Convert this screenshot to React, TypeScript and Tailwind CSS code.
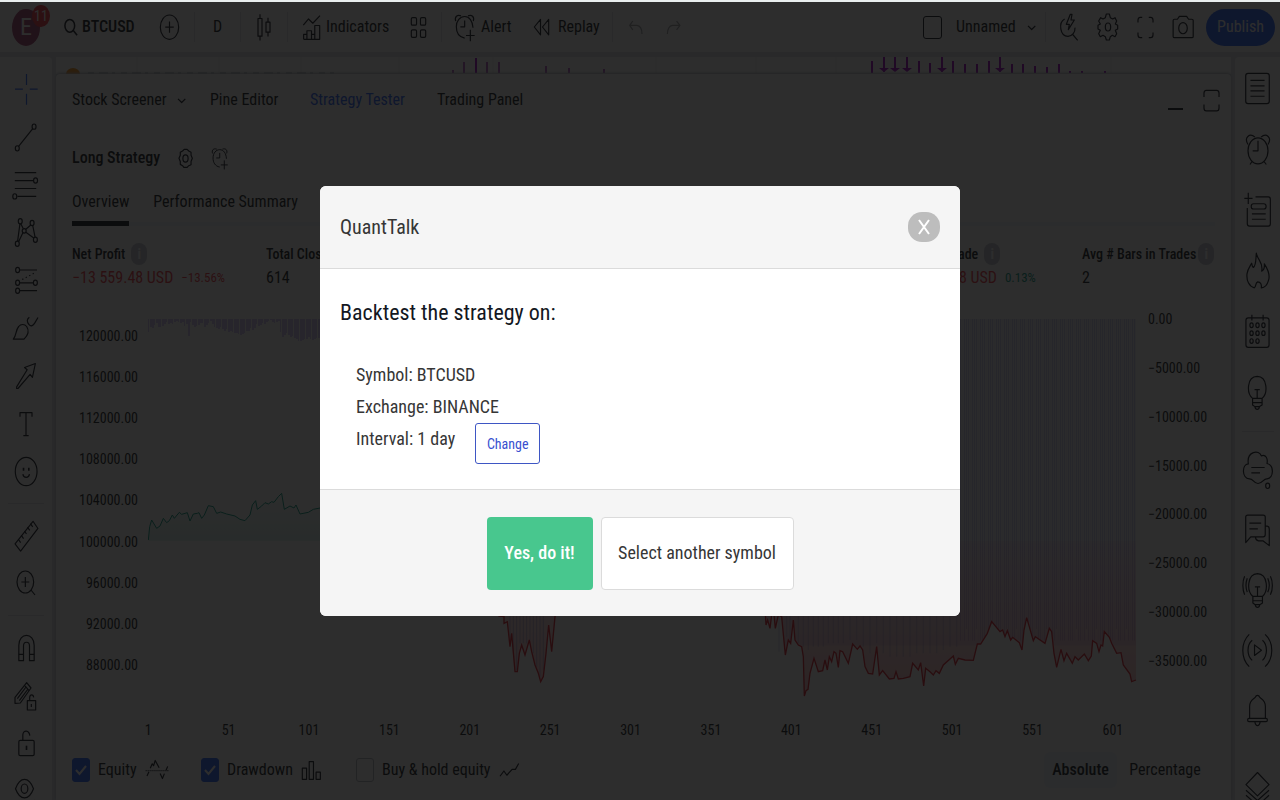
import type { ReactNode } from "react";

const ink = "#131722";

type IconProps = {
  box: string;
  className: string;
  children: ReactNode;
  color?: string;
  weight?: number;
};

/* Icons are drawn on a grid of three units to the pixel. */
function Icon({ box, className, children, color = ink, weight = 3.6 }: IconProps) {
  return (
    <svg
      viewBox={box}
      className={`shrink-0 ${className}`}
      fill="none"
      stroke={color}
      strokeWidth={weight}
      strokeLinejoin="round"
      aria-hidden="true"
    >
      {children}
    </svg>
  );
}

function AlarmPlus({ className }: { className: string }) {
  return (
    <Icon box="102 42 66 86" className={className}>
      <path d="M107 66C103 52 112 46 123 50M160 66C164 52 155 46 144 50" />
      <path d="M134 117C117 114 109 100 109 83C109 65 120 52 134 52S158 65 159 86M134 64V83H121" />
      <path d="M151 92V126M138 109H164" />
    </Icon>
  );
}

function Chevron() {
  return (
    <Icon box="530 68 30 26" className="h-[9px] w-[10px]">
      <path d="M533 76L544 87L555 76" />
    </Icon>
  );
}

function Info() {
  return (
    <span className="flex h-[22px] w-4 items-center justify-center rounded-full bg-[#c4c7d0] text-sm font-bold text-white">
      i
    </span>
  );
}

const leftTop: [string, ReactNode][] = [
  ["Cross", <Icon key="i" box="42 40 76 100" className="h-[33px] w-[25px]" color="#2962ff"><path d="M80 43V76M80 103V136M45 89H69M90 89H114" /></Icon>],
  ["Trend line", <Icon key="i" box="42 180 76 100" className="h-[33px] w-[25px]"><ellipse cx="52" cy="263" rx="6" ry="8" /><ellipse cx="103" cy="197" rx="6" ry="8" /><path d="M56 257L99 203" /></Icon>],
  ["Fib retracement", <Icon key="i" box="38 324 84 100" className="h-[33px] w-[28px]"><path d="M46 335H111M46 359H102M46 383H111M54 407H111" /><ellipse cx="109" cy="359" rx="6" ry="8" /><ellipse cx="46" cy="407" rx="6" ry="8" /></Icon>],
  ["Patterns", <Icon key="i" box="42 466 76 100" className="h-[33px] w-[25px]"><g><ellipse cx="61" cy="482" rx="6" ry="8" /><ellipse cx="97" cy="487" rx="6" ry="8" /><ellipse cx="73" cy="511" rx="6" ry="7" /><ellipse cx="52" cy="550" rx="6" ry="8" /><ellipse cx="107" cy="538" rx="6" ry="8" /></g><path d="M60 490L53 542M63 490L70 504M93 493L78 506M99 495L106 530M69 517L56 544M78 515L102 533" /></Icon>],
  ["Prediction", <Icon key="i" box="38 616 76 92" className="h-[31px] w-[25px]"><ellipse cx="49" cy="630" rx="6" ry="8" /><ellipse cx="49" cy="669" rx="6" ry="8" /><ellipse cx="103" cy="669" rx="6" ry="8" /><ellipse cx="49" cy="693" rx="6" ry="8" /><path d="M56 630H108M56 669H96M56 693H108" /><path d="M63 659L104 637" strokeDasharray="4 8" /></Icon>],
  ["Brush", <Icon key="i" box="40 46 84 80" className="h-[27px] w-[28px]"><path d="M44 118C54 106 50 92 60 80C66 72 78 72 84 80C92 92 88 106 76 118H44Z" /><path d="M92 52C84 58 84 66 91 74C97 82 104 76 108 70L118 53" /></Icon>],
  ["Arrow", <Icon key="i" box="42 180 76 90" className="h-[30px] w-[25px]"><path d="M107 187L74 199L82 206L50 258V263H54L91 220L98 229L107 187Z" /></Icon>],
  ["Text", <Icon key="i" box="56 326 48 84" className="h-[28px] w-4"><path d="M62 346V334H98V346M80 334V403M72 403H88" /></Icon>],
  ["Emoji", <Icon key="i" box="42 464 74 94" className="h-[31px] w-[25px]"><ellipse cx="78" cy="511" rx="33" ry="43" /><path d="M68 519C70 532 86 532 88 519" /><path d="M70 500V509M86 500V509" strokeWidth="5" /></Icon>],
];

const leftMid: [string, ReactNode][] = [
  ["Measure", <Icon key="i" box="38 654 80 104" className="h-[34px] w-[27px]"><path d="M98 661L113 683L60 752L43 730Z" /><path d="M53 716L60 726M62 704L69 714M72 691L78 700M81 679L88 689M90 668L97 678" /></Icon>],
  ["Zoom in", <Icon key="i" box="44 56 64 84" className="h-[28px] w-[22px]"><ellipse cx="74" cy="95" rx="25" ry="33" /><path d="M74 80V110M62 95H86M91 119L103 134" /></Icon>],
];

const leftBottom: [string, ReactNode][] = [
  ["Magnet", <Icon key="i" box="50 250 56 84" className="h-[28px] w-[19px]"><path d="M55 330V284C55 244 101 244 101 284V330H87V286C87 271 69 271 69 286V330H55Z" /><path d="M55 311H69M87 311H101" /></Icon>],
  ["Drawing mode", <Icon key="i" box="42 386 72 96" className="h-[32px] w-[24px]"><path d="M80 394L93 410L61 455L45 456V438L80 394ZM74 402L87 418M52 442L78 407M58 448L84 413" /><path d="M82 448H107V476H82ZM89 448V438C90 428 100 428 101 438" /><path d="M94 458V467" /></Icon>],
  ["Lock", <Icon key="i" box="50 540 56 84" className="h-[28px] w-[19px]"><rect x="55" y="574" width="46" height="46" rx="4" /><path d="M67 574V557C68 542 86 542 88 560" /><path d="M78 590V603" strokeWidth="5" /></Icon>],
  ["Hide", <Icon key="i" box="44 670 74 90" className="h-[30px] w-[25px]"><path d="M48 708C62 671 88 671 102 708C88 745 62 745 48 708Z" /><ellipse cx="75" cy="708" rx="10" ry="14" /><path d="M88 748C91 742 98 744 98 750M106 742L103 752" /></Icon>],
];

const rightTop: [string, ReactNode][] = [
  ["Watchlist", <Icon key="i" box="882 36 80 98" className="h-[33px] w-[27px]"><rect x="887" y="40" width="70" height="90" rx="7" /><path d="M901 61H943M901 77H943M901 92H943M901 108H943" /></Icon>],
  ["Alerts", <Icon key="i" box="884 216 78 104" className="h-[35px] w-[26px]"><ellipse cx="923" cy="272" rx="30" ry="39" /><path d="M893 253C880 232 898 217 914 231M953 253C966 232 948 217 932 231M923 242V272H907M905 304L899 313M941 304L948 313" /></Icon>],
  ["Object list", <Icon key="i" box="874 396 88 108" className="h-[36px] w-[29px]"><path d="M890 398V432M878 415H903M912 410H951Q957 410 957 418V492Q957 499 951 499H894Q887 499 887 491V444" /><rect x="899" y="431" width="45" height="16" rx="7" /><path d="M901 462H943M901 478H943" /></Icon>],
  ["Hotlists", <Icon key="i" box="884 576 78 116" className="h-[39px] w-[26px]"><path d="M918 582C922 604 940 610 934 636C941 633 943 625 942 614C955 634 960 650 954 665C951 676 943 685 933 686C934 678 932 668 922 668C914 671 918 683 912 686C896 682 888 664 890 644C892 629 900 620 904 612C905 617 905 623 909 625C918 618 916 600 918 582Z" /></Icon>],
  ["Calendar", <Icon key="i" box="882 44 80 106" className="h-[35px] w-[27px]"><rect x="887" y="56" width="70" height="89" rx="7" /><path d="M905 46V64M939 46V64" /><g><ellipse cx="904" cy="78" rx="5" ry="7" /><ellipse cx="922" cy="78" rx="5" ry="7" /><ellipse cx="940" cy="78" rx="5" ry="7" /><ellipse cx="904" cy="102" rx="5" ry="7" /><ellipse cx="922" cy="102" rx="5" ry="7" /><ellipse cx="940" cy="102" rx="5" ry="7" /><ellipse cx="904" cy="126" rx="5" ry="7" /><ellipse cx="922" cy="126" rx="5" ry="7" /></g></Icon>],
  ["My ideas", <Icon key="i" box="892 224 64 112" className="h-[37px] w-[21px]"><path d="M909 298C890 282 891 232 923 231C955 232 956 282 938 298V318L930 323C928 334 918 334 916 323L909 318ZM909 298H938M909 311H938M916 323H930M923 298V271M915 271H931" /></Icon>],
];

const rightBottom: [string, ReactNode][] = [
  ["Chat", <Icon key="i" box="874 448 96 122" className="h-[41px] w-[32px]"><path d="M893 489C887 451 926 445 932 465C946 460 952 474 949 488C971 493 970 532 949 534C938 533 936 548 922 548C908 548 908 533 896 534C873 533 873 491 893 489Z" /><path d="M902 500H942M902 516H928" /><ellipse cx="951" cy="555" rx="6" ry="8" /></Icon>],
  ["Messages", <Icon key="i" box="882 632 80 104" className="h-[35px] w-[27px]"><path d="M887 720V644Q887 638 893 638H939Q945 638 945 644V696Q945 703 939 703H902ZM945 671H951Q957 672 957 680V729L939 715H925Q917 714 916 704M898 662H933M898 679H923" /></Icon>],
  ["Ideas stream", <Icon key="i" box="874 62 98 112" className="h-[37px] w-[33px]"><path d="M909 136C890 120 891 68 923 67C955 68 956 120 938 136V156L930 161C928 172 918 172 916 161L909 156ZM909 136H938M909 149H938M916 161H930M923 136V107M915 107H931M884 75C877 90 877 115 884 131M892 81C887 95 887 110 892 123M962 75C970 90 970 115 962 131M954 81C960 95 960 110 954 123" /></Icon>],
  ["Streams", <Icon key="i" box="874 246 98 106" className="h-[35px] w-[33px]"><path d="M914 282L935 298L914 314ZM898 250C872 275 872 322 898 348M907 268C890 282 890 314 907 329M946 250C973 275 973 322 946 348M938 268C954 282 954 314 938 329" /></Icon>],
  ["Notifications", <Icon key="i" box="888 430 70 104" className="h-[35px] w-[23px]"><path d="M899 506V470C899 450 912 447 916 442C919 434 927 434 930 442C934 447 947 450 947 470V506" /><rect x="893" y="506" width="60" height="10" rx="4" /><path d="M915 516C917 532 929 532 931 516" /></Icon>],
];

function Rail({ items, className }: { items: [string, ReactNode][]; className: string }) {
  return (
    <div className={`flex w-full shrink-0 flex-col ${className}`}>
      {items.map(([label, icon]) => (
        <button key={label} aria-label={label} className="flex min-h-0 flex-1 items-center justify-center">
          {icon}
        </button>
      ))}
    </div>
  );
}

const Divider = () => <span className="h-[30px] w-px shrink-0 bg-[#e0e3eb]" />;

const gain =
  "445,720 449,680 455,660 470,685 480,678 490,655 500,668 508,662 517,645 523,655 538,637 545,643 562,638 570,663 580,642 592,640 597,638 605,655 613,645 625,617 640,620 650,640 662,636 680,642 705,648 720,658 735,662 750,645 757,615 767,602 772,628 785,618 795,608 805,612 815,605 822,607 835,590 845,580 853,628 870,618 882,624 888,615 900,642 925,637 940,628 970,622";
const dip =
  "85,408 102,410 102,430 112,425 120,500 125,460 135,575 142,575 148,520 155,495 165,525 178,480 185,515 195,555 205,580 212,605 220,590 228,520 236,435 245,515 256,400";
const loss =
  "886,400 888,435 893,420 900,445 905,405 912,405 916,445 925,405 935,410 946,525 955,480 962,490 970,420 975,480 985,495 995,500 1000,530 1003,648 1008,632 1014,628 1020,580 1032,535 1045,575 1058,572 1065,540 1072,570 1078,530 1085,545 1092,515 1098,520 1105,562 1110,512 1118,515 1135,550 1148,492 1162,508 1170,498 1178,510 1185,560 1195,580 1208,582 1220,500 1228,585 1238,572 1258,597 1272,595 1278,575 1285,597 1300,595 1320,590 1328,550 1345,570 1352,548 1361,618 1367,565 1380,575 1390,585 1398,572 1408,580 1420,555 1450,528 1456,553 1465,535 1485,540 1510,541 1522,492 1532,492 1552,460 1565,425 1590,455 1598,450 1605,470 1612,452 1622,480 1628,472 1648,488 1656,510 1662,450 1670,413 1690,482 1696,470 1725,490 1738,445 1745,455 1752,520 1760,562 1773,508 1782,542 1790,520 1807,550 1815,530 1825,540 1843,522 1855,542 1864,528 1868,482 1880,490 1887,515 1893,495 1898,498 1903,455 1918,472 1925,490 1940,520 1953,518 1960,555 1980,582 1985,605 1998,600";

const smallBars = [13, 8, 9, 6, 4, 8, 8, 7, 5, 3, 5, 4, 5, 3, 2, 3, 4, 3, 7, 5, 17, 3, 6, 8, 7, 6, 4, 4, 8, 6, 4, 2, 5, 8, 9, 10, 8, 10, 12, 10, 13, 12, 13, 14, 14, 15, 16, 15, 14, 12, 12, 9, 11, 9, 5, 7, 6, 4, 5, 3, 2, 1, 3, 4, 3, 2, 13, 18, 16, 14, 16, 18, 17, 19, 20, 22, 22, 21, 20, 20, 18, 20, 21, 20, 19, 19];
const stripes = Array.from({ length: 89 }, (_, i) => 960 + i * 2);

function Chart() {
  return (
    <svg viewBox="148 295 989 405" preserveAspectRatio="none" className="h-full min-w-0 flex-1" role="img" aria-label="Equity and drawdown">
      <defs>
        <linearGradient id="up" x1="0" y1="0" x2="0" y2="1">
          <stop offset="0" stopColor="#089981" stopOpacity="0.03" />
          <stop offset="1" stopColor="#089981" stopOpacity="0.15" />
        </linearGradient>
        <linearGradient id="down" gradientUnits="userSpaceOnUse" x1="0" y1="183" x2="0" y2="600">
          <stop offset="0" stopColor="#f23645" stopOpacity="0.05" />
          <stop offset="1" stopColor="#f23645" stopOpacity="0.28" />
        </linearGradient>
        <clipPath id="band">
          <polygon points={`886,-600 ${loss} 1998,-600`} />
        </clipPath>
      </defs>
      {smallBars.map((depth, i) => (
        <rect key={i} x={148 + i * 2} y="319" width={i % 3 ? 2 : 1} height={depth} fill="#673ad8" opacity="0.28" />
      ))}
      <g transform="translate(470 480) scale(0.33333)" clipPath="url(#band)">
        <rect x="886" y="-483" width="1112" height="980" fill="#7e57c2" opacity="0.1" />
        {stripes.map((x, i) => (
          <rect key={x} x={(x - 470) * 3} y="-483" width="3" height={i % 5 === 3 ? 930 : 965} fill="#4a4fd0" opacity={i % 4 === 1 ? 0.06 : 0.22} />
        ))}
      </g>
      <g transform="translate(0 300) scale(0.33333)">
        <polygon points={`${gain} 970,722 445,722`} fill="url(#up)" />
        <polyline points={gain} fill="none" stroke="#089981" strokeWidth="3" />
      </g>
      <g transform="translate(470 480) scale(0.33333)">
        <polygon points={`85,183 ${dip} 256,183`} fill="url(#down)" />
        <polygon points={`886,183 ${loss} 1998,183`} fill="url(#down)" />
        <path d="M120 400V480M130 400V520M140 400V570M150 400V490M160 400V490M170 400V490M180 400V480M190 400V520M200 400V560M210 400V590M220 400V570" stroke="#5c6bc0" strokeWidth="3" opacity="0.35" />
        <path d="M927 400V515M950 400V470M960 400V480M985 400V490M1000 400V500M1015 400V510M1030 400V500M1045 400V500M1060 400V500M1075 400V490M1090 400V490M1105 400V490M1120 400V490M1140 400V480M1160 400V480M1180 400V500M1200 400V520M1220 400V490M1240 400V520M1260 400V530M1280 400V530M1300 400V530M1320 400V530M1340 400V520M1360 400V520M1380 400V520M1400 400V520M1420 400V510M1440 400V500M1460 400V500" stroke="#5c6bc0" strokeWidth="4" opacity="0.2" />
        <polyline points={dip} fill="none" stroke="#e0202f" strokeWidth="4" />
        <polyline points={loss} fill="none" stroke="#e0202f" strokeWidth="4" />
      </g>
    </svg>
  );
}

function Toolbar() {
  return (
    <header className="flex h-[50px] shrink-0 items-center bg-white">
      <button aria-label="Account menu" className="flex w-[52px] justify-center">
        <span className="relative flex h-[37px] w-7 items-center justify-center rounded-[50%] bg-[#a63f70] text-2xl text-white">
          E
          <span className="absolute -top-1 left-5 flex h-[22px] w-[18px] items-center justify-center rounded-[50%] bg-[#f7323f] text-sm">11</span>
        </span>
      </button>
      <button className="flex w-[93px] items-center gap-1 pl-3 font-medium">
        <Icon box="190 50 46 60" className="h-5 w-[14px]" weight={5}>
          <ellipse cx="209" cy="76" rx="16" ry="21" />
          <path d="M220 91L233 107" />
        </Icon>
        BTCUSD
      </button>
      <button aria-label="Add symbol" className="flex w-[49px] justify-center">
        <Icon box="480 44 64 82" className="h-[27px] w-[21px]">
          <ellipse cx="512" cy="84" rx="28" ry="37" />
          <path d="M512 67V101M499 84H525" />
        </Icon>
      </button>
      <Divider />
      <button className="w-[45px]">D</button>
      <Divider />
      <button aria-label="Chart type" className="flex w-[46px] justify-center">
        <Icon box="770 40 48 86" className="h-[29px] w-4">
          <path d="M776 56H788V109H776ZM782 43V56M782 109V122M800 67H812V97H800ZM806 54V67M806 97V110" />
        </Icon>
      </button>
      <Divider />
      <button className="flex w-[108px] items-center gap-[5px] pl-[14px]">
        <Icon box="906 42 58 80" className="h-[27px] w-[19px]">
          <path d="M910 75L926 56L939 69L961 46M911 118V103H921V118M921 118V92H935V118M935 103H945V118M945 118V76H960V118H911" />
        </Icon>
        Indicators
      </button>
      <button aria-label="Layouts" className="flex w-[45px] justify-center">
        <Icon box="1228 48 52 68" className="h-[23px] w-[17px]">
          <path d="M1232 56Q1232 52 1236 52H1244Q1248 52 1248 56V71Q1248 75 1244 75H1236Q1232 75 1232 71ZM1260 56Q1260 52 1264 52H1272Q1276 52 1276 56V71Q1276 75 1272 75H1264Q1260 75 1260 71ZM1232 93Q1232 89 1236 89H1244Q1248 89 1248 93V108Q1248 112 1244 112H1236Q1232 112 1232 108ZM1260 93Q1260 89 1264 89H1272Q1276 89 1276 93V108Q1276 112 1272 112H1264Q1260 112 1260 108Z" />
        </Icon>
      </button>
      <Divider />
      <button className="flex w-20 items-center gap-[5px] pl-3">
        <AlarmPlus className="h-[29px] w-[22px]" />
        Alert
      </button>
      <button className="flex w-[90px] items-center gap-2 pl-[11px]">
        <Icon box="338 56 52 54" className="h-[18px] w-[17px]">
          <path d="M361 60V107L342 83ZM386 60V107L367 83Z" />
        </Icon>
        Replay
      </button>
      <Divider />
      <button aria-label="Undo" className="ml-[3px] flex w-[38px] justify-center opacity-40">
        <Icon box="624 60 44 44" className="size-[15px]">
          <path d="M638 63L629 76L638 89M629 76H650Q665 78 665 101" />
        </Icon>
      </button>
      <button aria-label="Redo" className="flex w-[38px] justify-center opacity-40">
        <Icon box="738 60 44 44" className="size-[15px]">
          <path d="M769 63L779 76L769 89M779 76H757Q743 78 742 101" />
        </Icon>
      </button>
      <div className="ml-auto flex items-center pr-[5px]">
        <button className="flex items-center">
          <span className="mr-[14px] h-[23px] w-[19px] rounded-[3px] border border-[#131722]" />
          <span className="w-[71px] text-left">Unnamed</span>
          <Chevron />
        </button>
        <span className="w-2" />
        <Divider />
        <button aria-label="Quick search" className="ml-[13px] flex w-[20px] justify-center">
          <Icon box="628 38 60 84" className="h-[28px] w-5">
            <path d="M662 42L650 72H659L656 88L674 59H664L667 42ZM645 56C626 66 630 108 655 108C668 107 677 96 676 82M668 101L684 120" />
          </Icon>
        </button>
        <button aria-label="Settings" className="ml-[18px] flex justify-center">
          <Icon box="739 40 66 84" className="h-[28px] w-[22px]">
            <path d="M767 43H776L779 54L786 58L793 54L798 64L794 73L801 77V88L794 92L798 102L793 111L785 107L779 111L776 121H767L764 111L757 107L749 111L744 102L749 92L742 88V77L749 73L744 64L750 54L757 58L764 54Z" />
            <ellipse cx="772" cy="82" rx="8" ry="12" />
          </Icon>
        </button>
        <button aria-label="Fullscreen" className="ml-[18px] flex justify-center">
          <Icon box="860 48 52 68" className="h-[23px] w-[17px]">
            <path d="M863 67V60Q863 51 870 51H876M896 51H902Q909 51 909 60V67M909 97V104Q909 113 902 113H896M876 113H870Q863 113 863 104V97" />
          </Icon>
        </button>
        <button aria-label="Take a snapshot" className="ml-[18px] flex justify-center">
          <Icon box="965 44 66 76" className="h-[25px] w-[22px]">
            <path d="M968 61Q968 57 972 57H981L987 48H1009L1015 57H1025Q1029 57 1029 61V109Q1029 113 1025 113H972Q968 113 968 109Z" />
            <ellipse cx="998" cy="84" rx="13" ry="17" />
          </Icon>
        </button>
        <button className="ml-3 h-[37px] w-[69px] rounded-full bg-[#2962ff] text-white">Publish</button>
      </div>
    </header>
  );
}

/* Signal marks above the panel: [x, length, arrow] */
const marks: [number, number, boolean][] = [
  [396, 3, false], [407, 11, false], [419, 15, false], [430, 11, false], [442, 11, false], [489, 7, false], [512, 5, false], [547, 4, false],
  [815, 12, false], [827, 15, true], [838, 14, true], [850, 14, true], [862, 12, false], [873, 10, false], [885, 15, true], [896, 12, false], [908, 9, false], [920, 9, false], [932, 12, false], [943, 15, true], [955, 9, false], [966, 9, false], [978, 7, false], [990, 6, false], [1002, 9, false], [1013, 2, false], [1025, 2, false], [1048, 2, false],
];

function Peek() {
  return (
    <svg viewBox="0 0 1175 17" preserveAspectRatio="none" className="h-[17px] w-full shrink-0 bg-white" aria-hidden="true">
      <path d="M81 0V17M163 0V17M245 0V17M343 0V17M437 0V17M600 0V17M700 0V17M780 0V17M1055 0V17" stroke="#eceef3" />
      <ellipse cx="17" cy="17" rx="7" ry="6" fill="#f7931a" />
      <path d="M32 16H278" stroke="#9598a1" strokeWidth="2" strokeDasharray="6 5 9 4 3 6" opacity="0.5" />
      {marks.map(([x, len, arrow]) => (
        <g key={x} fill={x < 600 && x !== 419 ? "#b45cc8" : "#a000c8"}>
          <rect x={x} y={arrow ? 0 : 16 - len} width="2" height={len} />
          {arrow && <path d={`M${x - 4} 11H${x + 6}L${x + 1} 15Z`} />}
        </g>
      ))}
    </svg>
  );
}

function Panel() {
  return (
    <section className="flex min-h-0 flex-1 flex-col rounded-t bg-white pl-4 shadow-[0_-1px_3px_#b2b5be]">
      <nav className="flex h-[52px] shrink-0 items-center pr-[11px]">
        <button className="flex w-[138px] items-center"><span className="w-[105px] text-left">Stock Screener</span><Chevron /></button>
        <button className="w-[100px] text-left">Pine Editor</button>
        <button className="w-[127px] text-left text-[#2962ff]">Strategy Tester</button>
        <button>Trading Panel</button>
        <button aria-label="Minimize" className="mt-4 ml-auto h-[3px] w-[15px] border-b-2 border-[#131722]" />
        <button aria-label="Maximize" className="ml-5">
          <Icon box="760 84 52 70" className="h-[23px] w-[17px]">
            <path d="M763 108V97Q763 88 770 88H802Q809 88 809 97V108M763 131V142Q763 151 770 151H802Q809 151 809 142V131" />
          </Icon>
        </button>
      </nav>
      <div className="flex h-16 shrink-0 items-center">
        <h1 className="w-[106px] font-medium">Long Strategy</h1>
        <button aria-label="Strategy settings" className="w-[33px]">
          <Icon box="534 262 46 62" className="h-[21px] w-[15px]">
            <path d="M553 265H562L567 270L574 274V283L578 292L574 302V312L567 315L562 320H552L548 315L541 311V302L537 292L541 283V274L548 270Z" />
            <ellipse cx="557" cy="293" rx="8" ry="11" />
          </Icon>
        </button>
        <button aria-label="Add alert"><AlarmPlus className="h-[23px] w-[18px]" /></button>
      </div>
      <div className="mr-4 flex h-9 shrink-0 gap-6 border-b-4 border-[#f0f3fa]">
        <button className="-mb-1 flex items-start border-b-[5px] border-[#131722]">Overview</button>
        <button className="flex items-start">Performance Summary</button>
      </div>
      <dl className="flex h-[69px] shrink-0 pt-4 leading-6">
        <div className="w-[194px]">
          <dt className="flex items-center gap-[6px] text-sm leading-6 font-medium">Net Profit <Info /></dt>
          <dd className="flex items-center gap-2 text-[#f23645]">−13 559.48 USD <span className="text-[13px]">−13.56%</span></dd>
        </div>
        <div>
          <dt className="text-sm leading-6 font-medium">Total Closed Trades</dt>
          <dd>614</dd>
        </div>
        <div className="ml-auto w-[159px]">
          <dt className="flex items-center gap-[6px] text-sm leading-6 font-medium">Avg Trade <Info /></dt>
          <dd className="flex items-center gap-2 text-[#f23645]">−22.08 USD <span className="text-[13px] text-[#089981]">0.13%</span></dd>
        </div>
        <div className="w-[149px]">
          <dt className="flex items-center gap-[2px] text-sm leading-6 font-medium">Avg # Bars in Trades <Info /></dt>
          <dd>2</dd>
        </div>
      </dl>
      <div className="flex h-[405px] shrink-0 text-sm">
        <div className="mr-[10px] flex h-[391px] w-[66px] flex-col pt-5 text-right">
          {["120000.00", "116000.00", "112000.00", "108000.00", "104000.00", "100000.00", "96000.00", "92000.00", "88000.00"].map((t) => (
            <span key={t} className="flex flex-1 items-center justify-end">{t}</span>
          ))}
        </div>
        <Chart />
        <div className="flex h-[390px] w-[94px] flex-col pl-[11px]">
          {["0.00", "−5000.00", "−10000.00", "−15000.00", "−20000.00", "−25000.00", "−30000.00", "−35000.00"].map((t) => (
            <span key={t} className="flex flex-1 items-center">{t}</span>
          ))}
        </div>
      </div>
      <div className="mr-[78px] ml-9 flex h-[60px] shrink-0 items-center text-sm">
        {["1", "51", "101", "151", "201", "251", "301", "351", "401", "451", "501", "551", "601"].map((t) => (
          <span key={t} className="flex-1 text-center">{t}</span>
        ))}
      </div>
      <div className="flex h-5 shrink-0 items-center pr-[30px]">
        <Check label="Equity" checked className="w-[129px]">
          <Icon box="430 618 76 66" className="h-[22px] w-[25px]">
            <path d="M436 669L442 656M446 646L452 632L456 638L461 622L473 644M476 662L483 677L489 662M494 652L499 640" />
            <path d="M432 653H504" strokeDasharray="3 3" />
          </Icon>
        </Check>
        <Check label="Drawdown" checked className="w-[155px]">
          <Icon box="902 622 64 62" className="h-[21px] w-[21px]">
            <path d="M906 646H919V680H906ZM927 626H940V680H927ZM948 658H961V680H948Z" />
          </Icon>
        </Check>
        <Check label="Buy & hold equity" className="">
          <Icon box="96 830 64 48" className="h-4 w-[21px]">
            <path d="M99 873L111 857L120 870L136 852H146L156 834" />
          </Icon>
        </Check>
        <button className="ml-auto h-9 w-[73px] rounded-md bg-[#f0f3fa] font-medium">Absolute</button>
        <button className="ml-3 w-[72px]">Percentage</button>
      </div>
    </section>
  );
}

function Check({ label, checked = false, className, children }: { label: string; checked?: boolean; className: string; children: ReactNode }) {
  return (
    <label className={`flex items-center gap-2 ${className}`}>
      <span className="relative flex h-6 w-[18px] items-center justify-center">
        <input
          type="checkbox"
          defaultChecked={checked}
          className="peer h-6 w-[18px] appearance-none rounded-[3px] border border-[#b2b5be] checked:border-[#2962ff] checked:bg-[#2962ff]"
        />
        <svg viewBox="0 0 12 12" className="pointer-events-none absolute hidden size-3 peer-checked:block" fill="none" stroke="white" strokeWidth="2" aria-hidden="true">
          <path d="M1 6L4.500 10L11 2" />
        </svg>
      </span>
      {label}
      {children}
    </label>
  );
}

function Dialog() {
  return (
    <div role="dialog" aria-modal="true" aria-labelledby="dialog-title" className="flex w-[640px] max-w-full flex-col overflow-hidden rounded-md bg-white text-lg text-[#363636]">
      <header className="flex h-[83px] items-center justify-between border-b border-[#dbdbdb] bg-[#f5f5f5] px-5">
        <h2 id="dialog-title" className="text-xl">QuantTalk</h2>
        <button aria-label="Close" className="flex h-[30px] w-8 items-center justify-center rounded-[14px] bg-[#bdbdbd]">
          <svg viewBox="0 0 12 16" className="h-4 w-3" fill="none" stroke="white" strokeWidth="2" aria-hidden="true"><path d="M1 1L11 15M11 1L1 15" /></svg>
        </button>
      </header>
      <div className="h-[220px] px-5 pt-7">
        <h3 className="text-[22px] leading-8 text-[#131722]">Backtest the strategy on:</h3>
        <ul className="px-4 pt-[30px] leading-8">
          <li>Symbol: BTCUSD</li>
          <li>Exchange: BINANCE</li>
          <li className="flex items-start gap-5">
            Interval: 1 day
            <button className="h-[41px] w-[65px] rounded-[3px] border border-[#3e56c4] bg-white text-sm text-[#3850d0]">Change</button>
          </li>
        </ul>
      </div>
      <footer className="flex h-[127px] items-center justify-center gap-2 border-t border-[#dbdbdb] bg-[#f5f5f5]">
        <button className="h-[73px] w-[106px] rounded bg-[#48c78e] font-medium text-white">Yes, do it!</button>
        <button className="h-[73px] w-[193px] rounded border border-[#dbdbdb] bg-white">Select another symbol</button>
      </footer>
    </div>
  );
}

export default function App() {
  return (
    <div className="h-screen overflow-hidden bg-[#e9eeee] pt-[2px] font-['Roboto_Condensed','Roboto',sans-serif] text-base whitespace-nowrap text-[#131722]">
      <div className="relative flex h-full flex-col overflow-hidden bg-[#e0e3eb]">
        <Toolbar />
        <div className="mt-[5px] flex min-h-0 flex-1 gap-1">
          <aside className="flex w-[52px] shrink-0 flex-col items-center rounded-tr bg-white pt-[9px]">
            <Rail items={leftTop} className="h-[429px]" />
            <span className="my-2 h-px w-9 shrink-0 bg-[#e0e3eb]" />
            <Rail items={leftMid} className="h-[95px]" />
            <span className="my-2 h-px w-9 shrink-0 bg-[#e0e3eb]" />
            <Rail items={leftBottom} className="h-[191px]" />
          </aside>
          <main className="flex min-w-0 flex-1 flex-col">
            <Peek />
            <Panel />
          </main>
          <aside className="flex w-[45px] shrink-0 flex-col items-center rounded-tl bg-white pt-px">
            <Rail items={rightTop} className="h-[365px]" />
            <span className="my-2 h-px w-8 shrink-0 bg-[#e0e3eb]" />
            <Rail items={rightBottom} className="h-[301px]" />
            <button aria-label="Object tree" className="mt-[30px] shrink-0">
              <Icon box="884 664 76 90" className="h-[30px] w-[25px]">
                <path d="M922 668L957 705L922 739L887 705ZM887 722L922 753L957 722M887 737L905 753M957 737L940 753" />
              </Icon>
            </button>
          </aside>
        </div>
        <div className="absolute inset-0 flex items-center justify-center bg-[rgba(10,10,10,0.86)]">
          <Dialog />
        </div>
      </div>
    </div>
  );
}
